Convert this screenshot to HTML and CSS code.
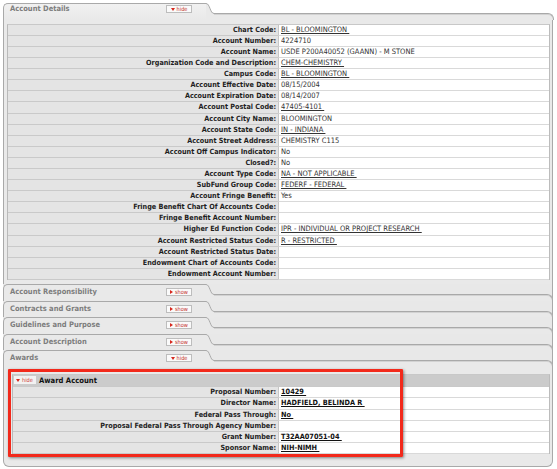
FILE: index.html
```html
<!DOCTYPE html>
<html>
<head>
<meta charset="utf-8">
<link rel="stylesheet" href="styles.css">
</head>
<body>
<div class="panel">
  <div class="tab first">
    <div class="tab-left">
      <span class="tab-title">Account Details</span>
      <span class="toggle"><svg class="tri" width="4" height="3" viewBox="0 0 4 3"><path d="M0 0H4L2 3Z"/></svg>hide</span>
    </div>
    <svg class="tab-curve" width="8" height="17" viewBox="0 0 8 17"><path class="fill" d="M0 0C4 0 4 10 8 10V17H0Z"/><path class="line" d="M0 0.5C4 0.5 4 10.5 8 10.5"/></svg>
    <div class="tab-rightwrap"><div class="tab-rightline"></div></div>
  </div>
  <div class="body details">
    <table class="grid">
      <tr><th>Chart Code:</th><td><a>BL - BLOOMINGTON&nbsp;</a></td></tr>
      <tr><th>Account Number:</th><td>4224710</td></tr>
      <tr><th>Account Name:</th><td>USDE P200A40052 (GAANN) - M STONE</td></tr>
      <tr><th>Organization Code and Description:</th><td><a>CHEM-CHEMISTRY&nbsp;</a></td></tr>
      <tr><th>Campus Code:</th><td><a>BL - BLOOMINGTON&nbsp;</a></td></tr>
      <tr><th>Account Effective Date:</th><td>08/15/2004</td></tr>
      <tr><th>Account Expiration Date:</th><td>08/14/2007</td></tr>
      <tr><th>Account Postal Code:</th><td><a>47405-4101&nbsp;</a></td></tr>
      <tr><th>Account City Name:</th><td>BLOOMINGTON</td></tr>
      <tr><th>Account State Code:</th><td><a>IN - INDIANA&nbsp;</a></td></tr>
      <tr><th>Account Street Address:</th><td>CHEMISTRY C115</td></tr>
      <tr><th>Account Off Campus Indicator:</th><td>No</td></tr>
      <tr><th>Closed?:</th><td>No</td></tr>
      <tr><th>Account Type Code:</th><td><a>NA - NOT APPLICABLE&nbsp;</a></td></tr>
      <tr><th>SubFund Group Code:</th><td><a>FEDERF - FEDERAL&nbsp;</a></td></tr>
      <tr><th>Account Fringe Benefit:</th><td>Yes</td></tr>
      <tr><th>Fringe Benefit Chart Of Accounts Code:</th><td></td></tr>
      <tr><th>Fringe Benefit Account Number:</th><td></td></tr>
      <tr><th>Higher Ed Function Code:</th><td><a>IPR - INDIVIDUAL OR PROJECT RESEARCH&nbsp;</a></td></tr>
      <tr><th>Account Restricted Status Code:</th><td><a>R - RESTRICTED&nbsp;</a></td></tr>
      <tr><th>Account Restricted Status Date:</th><td></td></tr>
      <tr><th>Endowment Chart of Accounts Code:</th><td></td></tr>
      <tr><th>Endowment Account Number:</th><td></td></tr>
    </table>
  </div>

  <div class="tab">
    <div class="tab-left">
      <span class="tab-title">Account Responsibility</span>
      <span class="toggle"><svg class="tri" width="3" height="4" viewBox="0 0 3 4"><path d="M0 0L3 2L0 4Z"/></svg>show</span>
    </div>
    <svg class="tab-curve" width="8" height="17" viewBox="0 0 8 17"><path class="fill" d="M0 0C4 0 4 10 8 10V17H0Z"/><path class="line" d="M0 0.5C4 0.5 4 10.5 8 10.5"/></svg>
    <div class="tab-rightwrap"><div class="tab-rightline"></div></div>
  </div>
  <div class="tab">
    <div class="tab-left">
      <span class="tab-title">Contracts and Grants</span>
      <span class="toggle"><svg class="tri" width="3" height="4" viewBox="0 0 3 4"><path d="M0 0L3 2L0 4Z"/></svg>show</span>
    </div>
    <svg class="tab-curve" width="8" height="17" viewBox="0 0 8 17"><path class="fill" d="M0 0C4 0 4 10 8 10V17H0Z"/><path class="line" d="M0 0.5C4 0.5 4 10.5 8 10.5"/></svg>
    <div class="tab-rightwrap"><div class="tab-rightline"></div></div>
  </div>
  <div class="tab">
    <div class="tab-left">
      <span class="tab-title">Guidelines and Purpose</span>
      <span class="toggle"><svg class="tri" width="3" height="4" viewBox="0 0 3 4"><path d="M0 0L3 2L0 4Z"/></svg>show</span>
    </div>
    <svg class="tab-curve" width="8" height="17" viewBox="0 0 8 17"><path class="fill" d="M0 0C4 0 4 10 8 10V17H0Z"/><path class="line" d="M0 0.5C4 0.5 4 10.5 8 10.5"/></svg>
    <div class="tab-rightwrap"><div class="tab-rightline"></div></div>
  </div>
  <div class="tab">
    <div class="tab-left">
      <span class="tab-title">Account Description</span>
      <span class="toggle"><svg class="tri" width="3" height="4" viewBox="0 0 3 4"><path d="M0 0L3 2L0 4Z"/></svg>show</span>
    </div>
    <svg class="tab-curve" width="8" height="17" viewBox="0 0 8 17"><path class="fill" d="M0 0C4 0 4 10 8 10V17H0Z"/><path class="line" d="M0 0.5C4 0.5 4 10.5 8 10.5"/></svg>
    <div class="tab-rightwrap"><div class="tab-rightline"></div></div>
  </div>
  <div class="tab">
    <div class="tab-left">
      <span class="tab-title">Awards</span>
      <span class="toggle"><svg class="tri" width="4" height="3" viewBox="0 0 4 3"><path d="M0 0H4L2 3Z"/></svg>hide</span>
    </div>
    <svg class="tab-curve" width="8" height="17" viewBox="0 0 8 17"><path class="fill" d="M0 0C4 0 4 10 8 10V17H0Z"/><path class="line" d="M0 0.5C4 0.5 4 10.5 8 10.5"/></svg>
    <div class="tab-rightwrap"><div class="tab-rightline"></div></div>
  </div>
  <div class="body awards">
    <table class="grid award">
      <tr class="subhead"><th colspan="2"><span class="mini-toggle"><svg class="tri" width="4" height="3" viewBox="0 0 4 3"><path d="M0 0H4L2 3Z"/></svg>hide</span>Award Account</th></tr>
      <tr><th>Proposal Number:</th><td><a>10429&nbsp;</a></td></tr>
      <tr><th>Director Name:</th><td><a>HADFIELD, BELINDA R&nbsp;</a></td></tr>
      <tr><th>Federal Pass Through:</th><td><a>No&nbsp;</a></td></tr>
      <tr><th>Proposal Federal Pass Through Agency Number:</th><td></td></tr>
      <tr><th>Grant Number:</th><td><a>T32AA07051-04&nbsp;</a></td></tr>
      <tr><th>Sponsor Name:</th><td><a>NIH-NIMH&nbsp;</a></td></tr>
    </table>
    <div class="callout"></div>
  </div>
</div>
</body>
</html>
```
FILE: styles.css
```css
html, body {
  margin: 0;
  background: #fff;
}
body {
  padding: 3px 4px 3px 3px;
  font-family: "DejaVu Sans Condensed", "DejaVu Sans", sans-serif;
  font-size: 7px;
  color: #222;
}
.panel {
  width: 550px;
}

/* tabs */
.tab {
  display: flex;
  height: 16.6px;
  background: #e8e8e8;
}
.tab.first {
  height: 17px;
  background: #fff;
}
.tab-left {
  box-sizing: border-box;
  width: 203px;
  flex: 0 0 203px;
  display: flex;
  align-items: flex-start;
  padding-top: 2px;
  border-top: 1px solid #a9a9a9;
  border-left: 1px solid #a9a9a9;
  border-top-left-radius: 5px;
  background: #e9e9e9;
}
.tab.first .tab-left {
  padding-top: 0;
  background: linear-gradient(#f1f1f1, #e9e9e9);
}
.tab-title {
  flex: 0 0 156px;
  padding-left: 6px;
  line-height: 10px;
  font-weight: bold;
  font-size: 7.5px;
  color: #7d7d7d;
}
.toggle {
  box-sizing: border-box;
  width: 26px;
  height: 8px;
  margin-top: 1px;
  display: flex;
  align-items: center;
  justify-content: center;
  gap: 2px;
  border: 1px solid #bdbdbd;
  background: #fafafa;
  font-size: 5.6px;
  color: #c4302b;
  line-height: 6px;
}
.tri {
  display: block;
  fill: #d6281e;
}
.tab-curve {
  flex: 0 0 8px;
  height: 17px;
  display: block;
}
.tab-curve .fill { fill: #e9e9e9; }
.tab-curve .line { fill: none; stroke: #a9a9a9; stroke-width: 1; }
.tab-rightwrap {
  flex: 1;
  display: flex;
  flex-direction: column;
  border-right: 1px solid #a9a9a9;
}
.tab.first .tab-rightwrap {
  border-right: none;
}
.tab-rightline {
  flex: 1;
  margin-top: 10px;
  margin-right: -1px;
  border-top: 1px solid #a9a9a9;
  border-right: 1px solid #a9a9a9;
  border-top-right-radius: 6px;
  background: #e9e9e9;
  box-shadow: inset 0 1px 0 #d2d2d2;
}

/* bodies */
.body {
  border-left: 1px solid #a9a9a9;
  border-right: 1px solid #a9a9a9;
  background: #e9e9e9;
}
.details {
  padding: 3.8px 2px 4px 3px;
}
.awards {
  position: relative;
  padding: 7.4px 2px 12px 8px;
  border-bottom: 1px solid #a9a9a9;
  border-radius: 0 0 6px 6px;
}

/* grids */
.grid {
  width: 100%;
  border-collapse: separate;
  border-spacing: 0;
  border-top: 1px solid #c8c8c8;
  border-left: 1px solid #b9b9b9;
  border-right: 1px solid #bcbcbc;
}
.grid th,
.grid td {
  height: 10.1px;
  line-height: 10.1px;
  padding: 0 2px;
  white-space: nowrap;
}
.grid th {
  width: 266px;
  text-align: right;
  font-weight: bold;
  font-size: 7.2px;
  color: #1e1e1e;
  background: #e4e4e4;
  border-bottom: 1px solid #c9c9c9;
}
.grid td {
  background: #fff;
  color: #333;
  font-size: 7.5px;
  border-left: 1px solid #c6c6c6;
  border-bottom: 1px solid #d9d9d9;
  text-align: left;
}
.grid a {
  color: #333;
  text-decoration: underline;
}
.award th {
  width: 261px;
}
.award td {
  font-size: 7.3px;
}
.award td a {
  font-weight: bold;
  color: #111;
}
.award tr.subhead th {
  height: 11px;
  line-height: 11px;
  text-align: left;
  background: #cbcbcb;
  padding: 0 1px;
  color: #111;
  font-size: 7.6px;
}
.mini-toggle {
  display: inline-flex;
  vertical-align: middle;
  align-items: center;
  gap: 2px;
  width: 22px;
  height: 8px;
  margin-right: 3px;
  padding-left: 2px;
  box-sizing: border-box;
  background: #f2f2f2;
  font-size: 5.6px;
  font-weight: normal;
  color: #d0403a;
  line-height: 8px;
  position: relative;
  top: -1px;
}
.callout {
  position: absolute;
  left: 4px;
  top: 2px;
  width: 395px;
  height: 88px;
  box-sizing: border-box;
  border: 3px solid #f2291b;
  border-radius: 1px;
  box-shadow: 1px 1px 3px rgba(0, 0, 0, 0.45);
}
```
